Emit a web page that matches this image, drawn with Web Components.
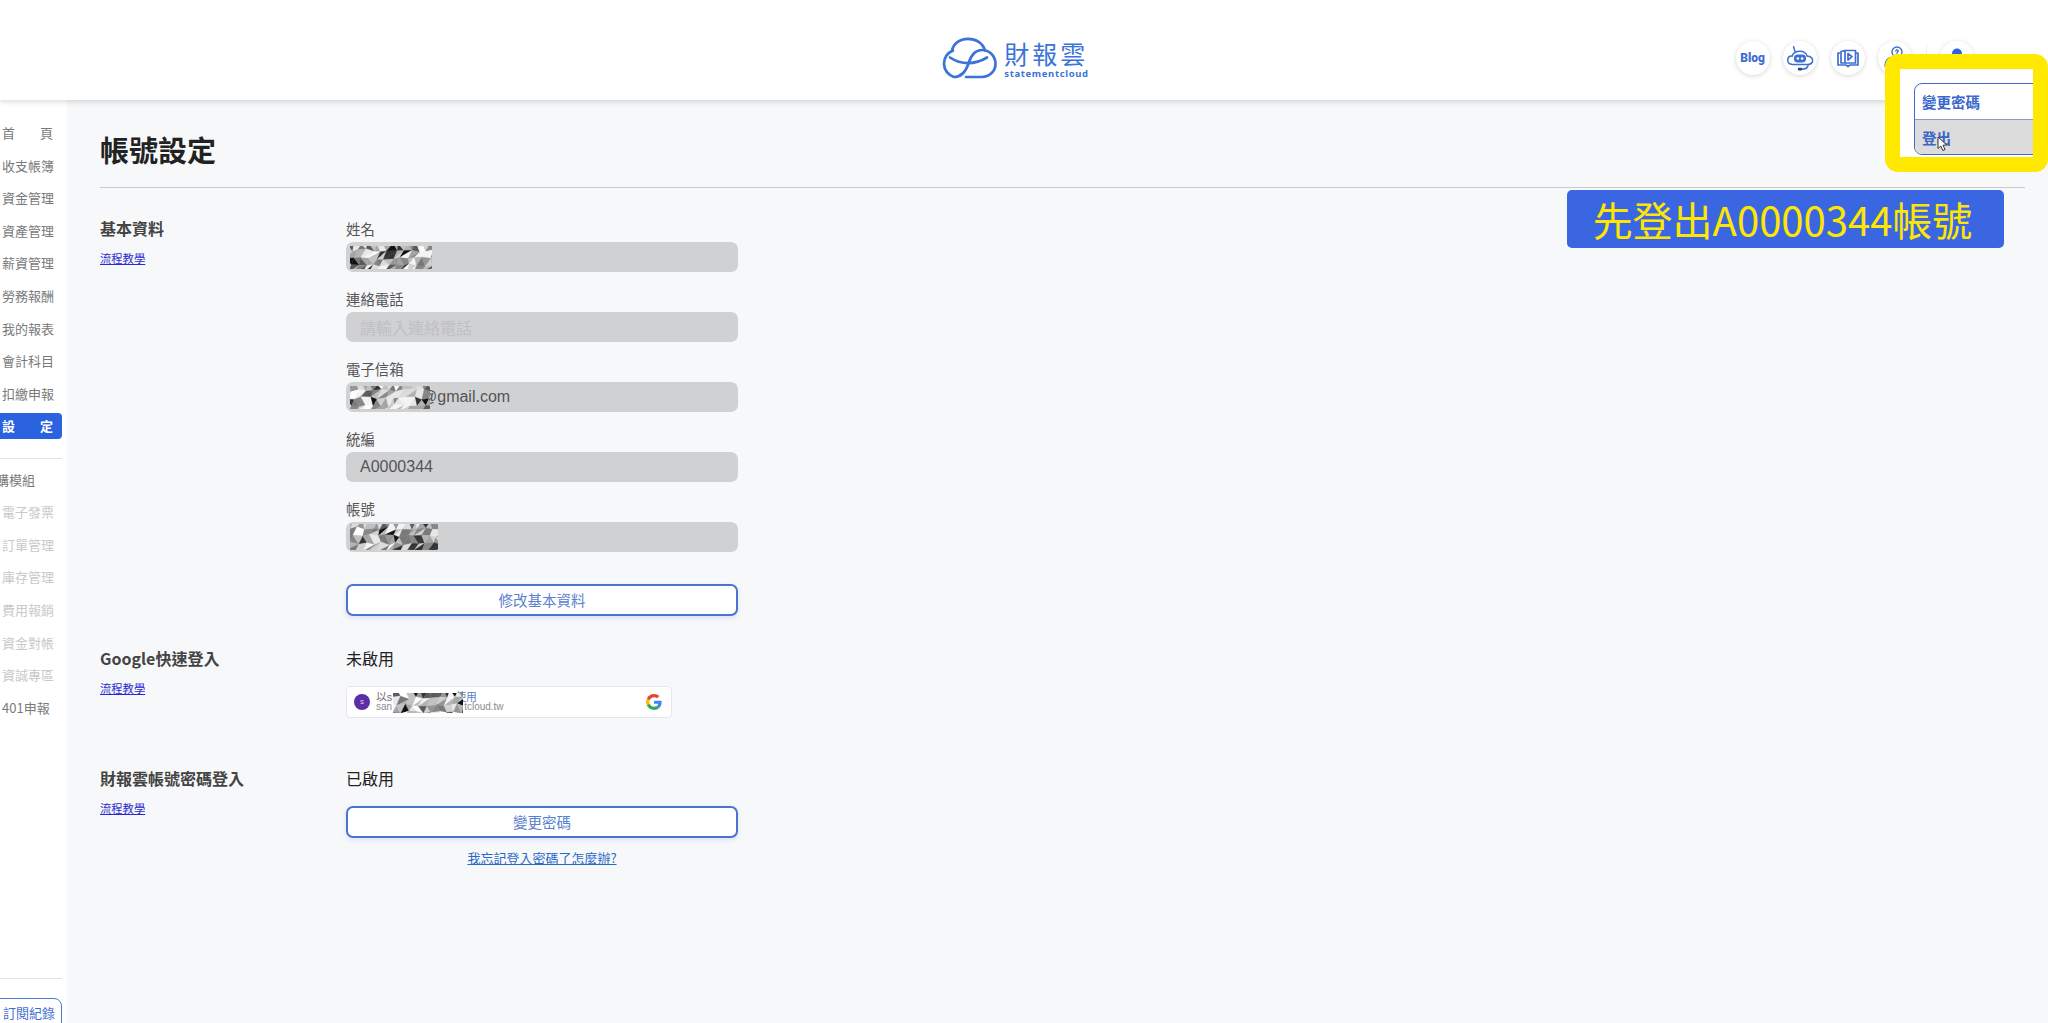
<!DOCTYPE html>
<html lang="zh-Hant">
<head>
<meta charset="utf-8">
<title>帳號設定</title>
<style>
  html, body { margin: 0; height: 100%; overflow: hidden; }
  body { font-family: "Noto Sans CJK TC", "Noto Sans", sans-serif; background: #f7f8fa; color: #333; }
</style>
</head>
<body>
<app-shell>
  <top-bar slot="top">
    <round-btn><span class="blog">Blog</span></round-btn>
    <round-btn>
      <svg width="30" height="30" viewBox="0 0 28 28" fill="none" stroke="#3f6fd0" stroke-width="1.4" stroke-linecap="round">
        <path d="M8 3.500 L9.500 8.500"/>
        <path d="M7 20 C3.500 20 2 17.500 2.500 15.300 C3 13.200 4.800 12 6.600 12.300 C7.500 9.500 10.500 7.600 13.800 7.600 C17.300 7.600 20 9.600 20.800 12.300 C23.600 12 26 14 25.800 16.500 C25.600 18.700 23.800 20 21.500 20 Z"/>
        <rect x="9" y="11.500" width="10" height="6" rx="3" fill="#3f6fd0"/>
        <circle cx="12" cy="14.500" r="1.200" fill="#fff" stroke="none"/>
        <circle cx="16" cy="14.500" r="1.200" fill="#fff" stroke="none"/>
        <path d="M21.500 21 C21 23.500 19 24.400 16 24.400"/>
        <rect x="12" y="23" width="4" height="2.600" rx="1.200" fill="#2f3f70" stroke="none"/>
      </svg>
    </round-btn>
    <round-btn>
      <svg width="26" height="26" viewBox="0 0 26 26" fill="none" stroke="#3f6fd0" stroke-width="1.700" stroke-linejoin="round">
        <path d="M5 8 L3 8 L3 20 L11 20 L13 21.500 L15 20 L23 20 L23 8 L21 8"/>
        <path d="M6 6.500 L10 5.500 L10 18 L6 18 Z"/>
        <path d="M10 5.500 L20.500 5.500 L20.500 18 L10 18"/>
        <path d="M13 8.500 L17 11.700 L13 15 Z" fill="#fff"/>
      </svg>
    </round-btn>
    <round-btn>
      <svg width="28" height="28" viewBox="0 0 28 28" fill="none" stroke="#3f6fd0" stroke-width="1.400" stroke-linecap="round">
        <circle cx="16" cy="8" r="5"/>
        <path d="M14.800 7 C15 5.600 17.400 5.800 17.200 7.200 C17.100 8 16 8.200 16 9.200"/>
        <path d="M4 22 C4 16.500 7 13.500 11 13.500"/>
      </svg>
    </round-btn>
    <i class="sep"></i>
    <round-btn>
      <svg width="28" height="28" viewBox="0 0 28 28" fill="#2f62dc">
        <circle cx="14" cy="9.500" r="5"/>
        <path d="M5 25 C5 19 9 16 14 16 C19 16 23 19 23 25 Z"/>
      </svg>
    </round-btn>
    <svg class="caret" width="8" height="6" viewBox="0 0 8 6" fill="none" stroke="#e4e6ea" stroke-width="1.400"><path d="M1 1 L4 4.500 L7 1"/></svg>
  </top-bar>

  <side-nav slot="side">
    <nav-item>首 頁</nav-item>
    <nav-item>收支帳簿</nav-item>
    <nav-item>資金管理</nav-item>
    <nav-item>資產管理</nav-item>
    <nav-item>薪資管理</nav-item>
    <nav-item>勞務報酬</nav-item>
    <nav-item>我的報表</nav-item>
    <nav-item>會計科目</nav-item>
    <nav-item>扣繳申報</nav-item>
    <nav-item active>設 定</nav-item>
    <nav-rule></nav-rule>
    <nav-item heading>加購模組</nav-item>
    <nav-item off>電子發票</nav-item>
    <nav-item off>訂單管理</nav-item>
    <nav-item off>庫存管理</nav-item>
    <nav-item off>費用報銷</nav-item>
    <nav-item off>資金對帳</nav-item>
    <nav-item off>資誠專區</nav-item>
    <nav-item plain>401申報</nav-item>
    <nav-foot>訂閱紀錄</nav-foot>
  </side-nav>

  <settings-page>
    <page-title>帳號設定</page-title>

    <form-section heading="基本資料">
      <form-field label="姓名" style="margin-top:3px"><mosaic-block w="82" h="23" seed="11"></mosaic-block></form-field>
      <form-field label="連絡電話" placeholder="請輸入連絡電話"></form-field>
      <form-field label="電子信箱"><mosaic-block w="80" h="23" seed="57"></mosaic-block><span class="after">@gmail.com</span></form-field>
      <form-field label="統編">A0000344</form-field>
      <form-field label="帳號"><mosaic-block w="88" h="26" seed="131"></mosaic-block></form-field>
      <outline-btn style="margin-top:15px">修改基本資料</outline-btn>
    </form-section>

    <form-section heading="Google快速登入" gap="30">
      <status-line>未啟用</status-line>
      <google-chip></google-chip>
    </form-section>

    <form-section heading="財報雲帳號密碼登入" gap="48">
      <status-line>已啟用</status-line>
      <outline-btn>變更密碼</outline-btn>
      <help-link>我忘記登入密碼了怎麼辦?</help-link>
    </form-section>
  </settings-page>

  <note-callout slot="over">先登出A0000344帳號</note-callout>
  <framed-menu slot="over"></framed-menu>
</app-shell>

<script>
function shadow(el, html) {
  el.attachShadow({ mode: 'open' }).innerHTML = html;
}

customElements.define('app-shell', class extends HTMLElement {
  constructor() {
    super();
    shadow(this, `
      <style>
        :host { display: grid; grid-template-columns: 67px 1fr; grid-template-rows: 100px 1fr; height: 1023px; width: 2048px; position: relative; overflow: hidden; }
        ::slotted([slot=top]) { grid-column: 1 / 3; }
      </style>
      <slot name="top"></slot>
      <slot name="side"></slot>
      <slot></slot>
      <slot name="over"></slot>`);
  }
});

customElements.define('top-bar', class extends HTMLElement {
  constructor() {
    super();
    shadow(this, `
      <style>
        :host { display: grid; grid-template-columns: 1fr auto 1fr; align-items: center; padding: 16px 20px 0 0; box-sizing: border-box; height: 100px; background: #fff; box-shadow: 0 2px 5px rgba(0,0,0,.14); position: relative; z-index: 2; }
        .logo { grid-column: 2; display: flex; gap: 7px; align-items: center; }
        .words { display: flex; flex-direction: column; gap: 1px; color: #3a74d8; padding-top: 2px; }
        .zh { font-size: 25px; line-height: 27px; letter-spacing: 3px; font-weight: 400; white-space: nowrap; }
        .en { font-family: "Noto Sans", sans-serif; font-size: 9.5px; line-height: 11px; font-weight: 700; letter-spacing: .65px; }
        .tools { display: flex; align-items: center; justify-content: flex-end; gap: 13.5px; }
      </style>
      <div></div>
      <div class="logo">
        <svg width="58" height="42" viewBox="0 0 58 42" fill="none" stroke="#3a74d8" stroke-width="2.700" stroke-linecap="round">
          <path d="M14 13.500 A14 14 0 0 0 15 40 C23 40 27 34 29.500 26.500 C32 18 37 13 43 13 C51.500 13 56.500 20 56.500 27 C56.500 34.500 50 40 43 40 L27 40"/>
          <path d="M13 14 C14 6.500 21 1.800 29 1.800 C37 1.800 44 6 46 13.500"/>
          <path d="M11 20.500 C22 28 36 28 48 20.500"/>
        </svg>
        <div class="words"><span class="zh">財報雲</span><span class="en">statementcloud</span></div>
      </div>
      <div class="tools"><slot></slot></div>`);
  }
  connectedCallback() {
    this.querySelectorAll('.sep').forEach(s => {
      s.style.cssText = 'display:block;width:1px;height:26px;background:#eceef1';
    });
    const c = this.querySelector('.caret');
    if (c) c.style.cssText = 'margin-left:21.5px;margin-right:11px';
    const b = this.querySelector('.blog');
    if (b) b.style.cssText = 'font:900 12px Roboto,sans-serif;color:#3f6fd0';
  }
});

customElements.define('round-btn', class extends HTMLElement {
  constructor() {
    super();
    shadow(this, `
      <style>
        :host { display: flex; width: 34px; height: 34px; border-radius: 50%; background: #fff; box-shadow: 0 1px 5px rgba(0,0,0,.16); align-items: center; justify-content: center; overflow: hidden; flex: none; }
      </style>
      <slot></slot>`);
  }
});

customElements.define('side-nav', class extends HTMLElement {
  constructor() {
    super();
    shadow(this, `
      <style>
        :host { display: flex; flex-direction: column; gap: 6.6px; background: #fff; padding-top: 20px; box-sizing: border-box; overflow: hidden; height: 923px; box-shadow: 1px 0 3px rgba(0,0,0,.05); }
      </style>
      <slot></slot>`);
  }
});

customElements.define('nav-item', class extends HTMLElement {
  constructor() {
    super();
    shadow(this, `
      <style>
        :host { display: block; box-sizing: border-box; width: 69px; margin-left: -7px; height: 26px; line-height: 26px; padding: 0 9px; font-size: 13px; color: #7a7a7a; text-align: justify; text-align-last: justify; border-radius: 4px; white-space: nowrap; flex: none; }
        :host([active]) { background: #2a62e0; color: #fff; font-weight: 700; }
        :host([off]) { color: #c9c9c9; }
        :host([plain]) { text-align-last: left; }
        :host([heading]) { margin: 1px 0 0 -17px; padding: 0; width: 60px; text-align-last: left; }
      </style>
      <slot></slot>`);
  }
});

customElements.define('nav-rule', class extends HTMLElement {
  constructor() {
    super();
    shadow(this, `<style>:host { display: block; width: 62px; height: 1px; background: #e2e2e2; margin: 12px 0 0; flex: none; }</style>`);
  }
});

customElements.define('nav-foot', class extends HTMLElement {
  constructor() {
    super();
    shadow(this, `
      <style>
        :host { display: block; margin-top: auto; margin-bottom: -7px; margin-left: -7px; flex: none; padding-top: 20px; width: 69px; border-top: 0; position: relative; }
        .rule { position: absolute; top: 0; left: 0; right: 0; height: 1px; background: #e2e2e2; }
        .btn { box-sizing: border-box; height: 32px; border: 1px solid #4a78d8; border-radius: 8px; padding-left: 9px; line-height: 28px; font-size: 13px; color: #3f6fd0; white-space: nowrap; }
      </style>
      <div class="rule"></div>
      <div class="btn"><slot></slot></div>`);
  }
});

customElements.define('settings-page', class extends HTMLElement {
  constructor() {
    super();
    shadow(this, `
      <style>
        :host { display: block; padding: 29px 23px 0 33px; background: #f7f8fa; min-width: 0; }
      </style>
      <slot></slot>`);
  }
});

customElements.define('page-title', class extends HTMLElement {
  constructor() {
    super();
    shadow(this, `
      <style>
        :host { display: block; font-size: 29px; font-weight: 700; line-height: 40px; color: #222; padding-bottom: 18px; border-bottom: 1px solid #c9cacc; margin-bottom: 28px; }
      </style>
      <slot></slot>`);
  }
});

customElements.define('form-section', class extends HTMLElement {
  constructor() {
    super();
    shadow(this, `
      <style>
        :host { display: grid; grid-template-columns: 246px 392px; }
        h3 { margin: 0; font-size: 16px; line-height: 24px; font-weight: 700; color: #444; }
        a { display: block; margin-top: 10px; font-size: 11.3px; line-height: 16px; color: #2a2ad0; text-decoration: underline; }
        .r { display: flex; flex-direction: column; }
      </style>
      <div><h3></h3><a href="#">流程教學</a></div>
      <div class="r"><slot></slot></div>`);
  }
  connectedCallback() {
    this.shadowRoot.querySelector('h3').textContent = this.getAttribute('heading');
    const g = this.getAttribute('gap');
    if (g) this.style.marginTop = g + 'px';
  }
});

customElements.define('form-field', class extends HTMLElement {
  constructor() {
    super();
    shadow(this, `
      <style>
        :host { display: block; margin-bottom: 17px; }
        label { display: block; font-size: 14.4px; line-height: 20px; color: #555; margin: 0 0 3px; }
        .box { display: flex; align-items: center; box-sizing: border-box; height: 30px; background: #d0d1d3; border-radius: 7px; padding-left: 14px; font: 16px "Liberation Sans", "Noto Sans CJK TC", sans-serif; color: #555; }
        .ph { color: #bfc0c2; font-family: "Noto Sans CJK TC", sans-serif; }
        ::slotted(mosaic-block) { position: relative; z-index: 1; }
        ::slotted(.after) { margin-left: -9px; }
      </style>
      <label></label>
      <div class="box"><span class="ph"></span><slot></slot></div>`);
  }
  connectedCallback() {
    this.shadowRoot.querySelector('label').textContent = this.getAttribute('label');
    this.shadowRoot.querySelector('.ph').textContent = this.getAttribute('placeholder') || '';
    if (this.querySelector('mosaic-block')) this.shadowRoot.querySelector('.box').style.paddingLeft = '4px';
  }
});

customElements.define('mosaic-block', class extends HTMLElement {
  constructor() {
    super();
    shadow(this, `
      <style>
        :host { display: inline-block; line-height: 0; flex: none; }
        svg { display: block; filter: blur(.4px); }
      </style>
      <svg></svg>`);
  }
  connectedCallback() {
    const w = +this.getAttribute('w'), h = +this.getAttribute('h');
    let s = +this.getAttribute('seed') || 7;
    const rnd = () => (s = (s * 16807) % 2147483647) / 2147483647;
    // lighter greys turn up more often than the near blacks
    const shades = ['#ffffff', '#f4f4f4', '#e8e8e8', '#dcdcdc', '#d0d0d0', '#c0c0c0', '#b4b4b4', '#a4a4a4', '#969696', '#868686', '#787878', '#5a5a5a', '#333333', '#111111'];
    const cell = 7.5;
    const cols = Math.ceil(w / cell) + 2, rows = Math.ceil(h / cell) + 2;
    for (let i = 0; i < 20; i++) rnd();
    const pts = [];
    for (let y = 0; y <= rows; y++) {
      pts[y] = [];
      for (let x = 0; x <= cols; x++) {
        pts[y][x] = [x * cell + (y % 2 ? cell / 2 : 0) + (rnd() - .5) * 3.5, y * cell + (rnd() - .5) * 3.5];
      }
    }
    let out = '';
    const tri = (a, b, c, col) => {
      out += `<polygon points="${a} ${b} ${c}" fill="${col}" stroke="${col}" stroke-width=".3"/>`;
    };
    const pick = () => shades[Math.floor(rnd() * shades.length)];
    for (let y = 0; y < rows; y++) {
      for (let x = 0; x < cols; x++) {
        const a = pick();
        tri(pts[y][x], pts[y][x + 1], pts[y + 1][x], a);
        tri(pts[y][x + 1], pts[y + 1][x + 1], pts[y + 1][x], rnd() < .3 ? a : pick());
      }
    }
    const svg = this.shadowRoot.querySelector('svg');
    svg.setAttribute('width', w);
    svg.setAttribute('height', h);
    svg.setAttribute('viewBox', `3 3 ${w} ${h}`);
    svg.innerHTML = out;
  }
});

customElements.define('outline-btn', class extends HTMLElement {
  constructor() {
    super();
    shadow(this, `
      <style>
        :host { display: block; box-sizing: border-box; height: 32px; line-height: 28px; text-align: center; background: #fff; border: 2px solid #4a74cf; border-radius: 7px; font-size: 14.5px; color: #5a80d0; box-shadow: 0 2px 5px rgba(60,100,220,.15); }
      </style>
      <slot></slot>`);
  }
});

customElements.define('status-line', class extends HTMLElement {
  constructor() {
    super();
    shadow(this, `
      <style>:host { display: block; font-size: 16px; line-height: 24px; font-weight: 400; color: #222; margin-bottom: 16px; }</style>
      <slot></slot>`);
  }
});

customElements.define('help-link', class extends HTMLElement {
  constructor() {
    super();
    shadow(this, `
      <style>:host { display: block; margin-top: 10px; text-align: center; font-size: 13px; line-height: 20px; color: #2a68c8; text-decoration: underline; }</style>
      <slot></slot>`);
  }
});

customElements.define('google-chip', class extends HTMLElement {
  constructor() {
    super();
    shadow(this, `
      <style>
        :host { display: flex; align-items: center; box-sizing: border-box; width: 326px; height: 32px; background: #fff; border: 1px solid #e6e7ea; border-radius: 4px; padding: 0 9px 0 7px; position: relative; font-family: "Liberation Sans", "Noto Sans CJK TC", sans-serif; }
        .av { width: 16px; height: 16px; border-radius: 50%; background: #5a2fa8; color: #d9cdf0; font-size: 8px; line-height: 16px; text-align: center; flex: none; margin-right: 6px; }
        .t { flex: 1; font-size: 10.8px; line-height: 10.5px; color: #6a6d75; white-space: nowrap; }
        .t div { display: flex; }
        .t b { font-weight: 400; display: block; }
        .cover { position: absolute; left: 46px; top: 6px; }
      </style>
      <span class="av">s</span>
      <div class="t">
        <div><b>以s</b><b style="margin-left:63px;color:#5f7fc0">使用</b></div>
        <div style="font-size:10px;color:#8a8d93"><b>san</b><b style="margin-left:72px">tcloud.tw</b></div>
      </div>
      <svg width="16" height="16" viewBox="0 0 48 48">
        <path fill="#EA4335" d="M24 9.500c3.500 0 6.700 1.200 9.200 3.600l6.900-6.900C35.900 2.400 30.500 0 24 0 14.600 0 6.500 5.400 2.600 13.200l8 6.200C12.400 13.700 17.700 9.500 24 9.500z"/>
        <path fill="#4285F4" d="M46.900 24.500c0-1.600-.1-3.100-.4-4.500H24v9h12.900c-.6 3-2.200 5.500-4.700 7.200l7.700 6c4.500-4.200 7-10.300 7-17.700z"/>
        <path fill="#FBBC05" d="M10.500 28.600c-.5-1.400-.8-3-.8-4.600s.3-3.200.8-4.600l-8-6.200C.9 16.500 0 20.100 0 24s.9 7.500 2.600 10.800l7.900-6.200z"/>
        <path fill="#34A853" d="M24 48c6.500 0 11.900-2.100 15.900-5.800l-7.700-6c-2.200 1.500-4.900 2.300-8.200 2.300-6.300 0-11.600-4.200-13.500-9.900l-8 6.200C6.500 42.600 14.600 48 24 48z"/>
      </svg>
      <mosaic-block class="cover" w="70" h="20" seed="23"></mosaic-block>`);
  }
});

customElements.define('note-callout', class extends HTMLElement {
  constructor() {
    super();
    shadow(this, `
      <style>
        :host { position: absolute; left: 1567px; top: 190px; width: 437px; height: 58px; box-sizing: border-box; padding-right: 6px; display: flex; align-items: center; justify-content: center; background: #3b66e2; border-radius: 5px; color: #ffe600; font-size: 40px; font-weight: 400; line-height: 58px; white-space: nowrap; z-index: 3; }
      </style>
      <slot></slot>`);
  }
});

customElements.define('framed-menu', class extends HTMLElement {
  constructor() {
    super();
    shadow(this, `
      <style>
        :host { position: absolute; left: 1885px; top: 54px; width: 163px; height: 118px; box-sizing: border-box; border: 15px solid #ffe900; border-radius: 13px; background: #fff; overflow: hidden; z-index: 4; }
        .menu { position: absolute; left: 14px; top: 14px; width: 160px; height: 72px; box-sizing: border-box; border: 1.5px solid #4468c8; border-radius: 8px; overflow: hidden; font-size: 14.5px; font-weight: 700; color: #3a66cc; background: #fff; }
        .row { height: 35px; line-height: 36px; padding-left: 7px; }
        .row + .row { border-top: 1px solid #8a9cc4; background: #dcdcdc; line-height: 35px; }
        .cur { position: absolute; left: 37px; top: 67px; }
      </style>
      <div class="menu">
        <div class="row">變更密碼</div>
        <div class="row">登出</div>
      </div>
      <svg class="cur" width="12" height="16" viewBox="0 0 12 16"><path d="M1 1 L1 12.500 L3.800 10 L5.800 14.500 L8 13.500 L6 9.200 L9.800 9 Z" fill="#fff" stroke="#333" stroke-width="1"/></svg>`);
  }
});
</script>
</body>
</html>
